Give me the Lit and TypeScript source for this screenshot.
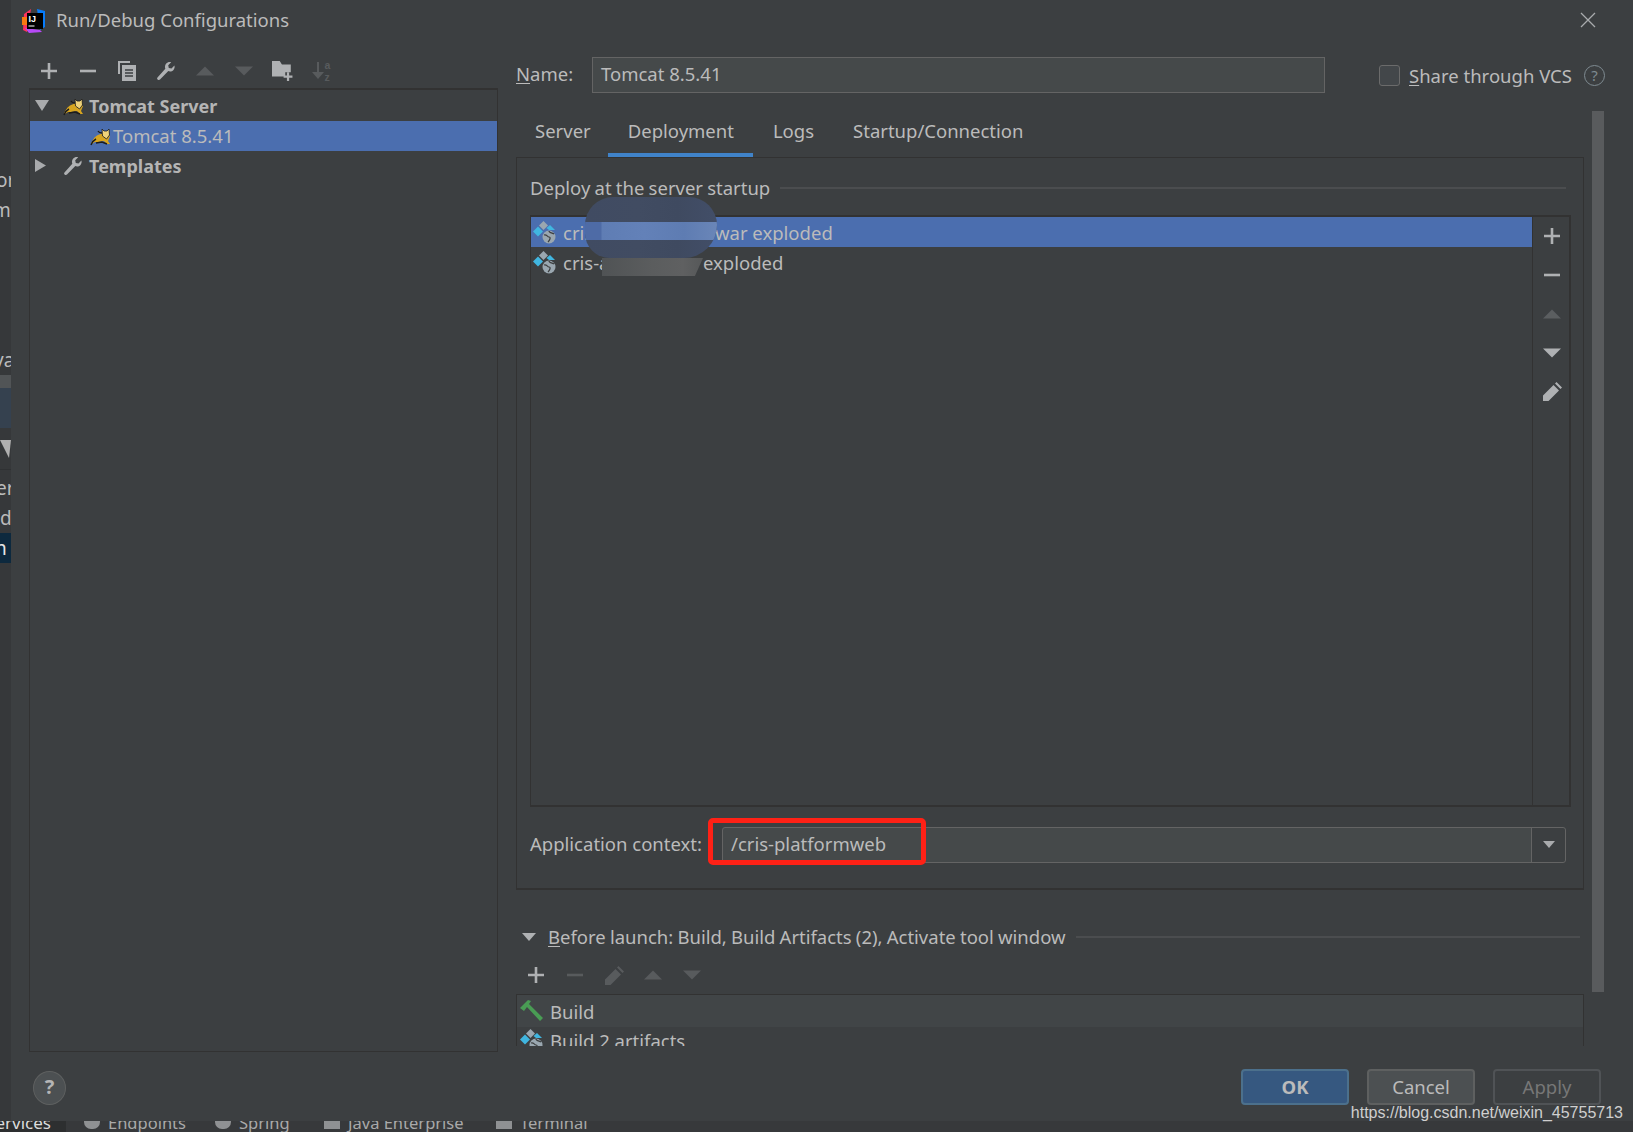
import { LitElement, html, svg, css } from "lit"
import { customElement } from "lit/decorators.js"

const plus = svg`<path d="M8 0v16M0 8h16" stroke="currentColor" stroke-width="2.6" fill="none"/>`
const minus = svg`<path d="M0 8h16" stroke="currentColor" stroke-width="2.6" fill="none"/>`
const up = svg`<path d="M9 4.500 18 13.500H0z" fill="currentColor"/>`
const down = svg`<path d="M0 4.500h18L9 13.500z" fill="currentColor"/>`
const pencil = svg`<path d="M0 19v-5.500L10.500 3l5.500 5.500L5.500 19zM12 1.500 13.500 0 19 5.500l-1.500 1.500z" fill="currentColor"/>`
const copy = svg`<path d="M0 0h12v2H2v11H0z" fill="currentColor"/><path d="M4 4h14v16H4z" fill="currentColor"/><path d="M7 9h8M7 12h8M7 15h8" stroke="#3c3f41" stroke-width="1.3"/>`
const wrench = svg`<path d="M1.500 16.500 9.300 7.800c-.9-2.700.1-5.300 2.400-6.400 1.200-.6 2.500-.6 3.500-.2l-3 3 .6 2.700 2.700.6 2.900-3c.5 1.500.2 3.100-.9 4.400-1.400 1.500-3.400 1.900-5.200 1.200L4 18.600c-.8.600-1.800.4-2.400-.2-.6-.6-.7-1.300-.1-1.900z" fill="currentColor"/>`

function icon(body: unknown, w = 16, h = 16, cls = "") {
  return html`<svg class="ico ${cls}" width=${w} height=${h} viewBox="0 0 ${w} ${h}">${body}</svg>`
}

const folderPlus = html`<svg class="ico" width="21" height="21" viewBox="0 0 19 19">
  <path d="M0 1h7l2 3h8v7h-5v4H0z" fill="currentColor"/>
  <path d="M14.500 11v8M10.500 15h8" stroke="currentColor" stroke-width="2" fill="none"/>
</svg>`

const tomcat = html`<svg class="ico" width="22" height="20" viewBox="0 0 22 20">
  <path d="M1 17c2-3 3-6 7-8l5-2 7 3-2 5 2 3h-3l-3-3-6 1-3 0-3 2z" fill="#d7a520"/>
  <path d="M12 3l2 2h3l2-2 .5 6-3 4-4-3z" fill="#efd37a" stroke="#1c1c1c" stroke-width=".8"/>
  <path d="M1 19c1-3 3-5 5-6M8 5c1 2 2 2 4 2M6 17l6-1 5 2" stroke="#1c1c1c" stroke-width="1.4" fill="none"/>
</svg>`

const artifact = html`<svg class="ico" width="24" height="24" viewBox="0 0 24 24">
  <path d="M10.500 1 15 5.500 10.500 10 6 5.500z" fill="#9aa7b0"/>
  <path d="M5 6.500 10 11.500 5 16.500 0 11.500z" fill="#40b6e0"/>
  <path d="M17 5l5 5h-6l-2.500-2z" fill="#40b6e0"/>
  <circle cx="16" cy="17" r="6.500" fill="#9aa7b0"/>
  <path d="M11 15c3-1 3 2 5 2s1 3-1 5M16 11c0 2 4 2 5 3" stroke="#3c3f41" stroke-width="1.2" fill="none"/>
</svg>`

const hammer = html`<svg class="ico" width="24" height="24" viewBox="0 0 24 24">
  <path d="M0 9 8 1l3 1-2 3 14 14-3 3L7 8l-3 4z" fill="#499c54"/>
</svg>`

const logo = html`<svg class="ico" width="24" height="25" viewBox="0 0 24 25">
  <path d="M2 6 9 1 5 24l-4-2z" fill="#fe315d"/>
  <path d="M0 9h5v8H0z" fill="#f97a12"/>
  <path d="M15 1l8 2v16l-5 3z" fill="#087cfa"/>
  <path d="M3 20l15 2 2 2-13 1z" fill="#b74af7"/>
  <path d="M5 5h16v16H5z" fill="#000"/>
  <text x="6.500" y="14" font-family="Liberation Sans, sans-serif" font-size="9" font-weight="700" fill="#fff">IJ</text>
  <path d="M6.500 18h6" stroke="#fff" stroke-width="1"/>
</svg>`

const sortAz = html`<svg class="ico" width="20" height="20" viewBox="0 0 20 20">
  <path d="M6 1v13" stroke="currentColor" stroke-width="2"/>
  <path d="M0 11h12l-6 7z" fill="currentColor"/>
  <text x="12.500" y="8" font-family="Liberation Sans, sans-serif" font-size="10.5" font-weight="700" fill="currentColor">a</text>
  <text x="12.500" y="19.500" font-family="Liberation Sans, sans-serif" font-size="10.5" font-weight="700" fill="currentColor">z</text>
</svg>`

@customElement("app-root")
export class AppRoot extends LitElement {
  static styles = css`
    :host {
      display: block;
      position: relative;
      width: 1633px;
      height: 1132px;
      overflow: hidden;
      background: #3c3f41;
      color: #bbbbbb;
      font-family: "Noto Sans", "Open Sans", sans-serif;
      font-size: 18.5px;
    }

    .ico {
      display: block;
      flex: none;
    }

    /* IDE behind the dialog, the dialog paints over whatever sticks out */
    .ide {
      display: grid;
      grid-template-columns: 11px 1fr 11px;
      grid-template-rows: 1121px 11px;
      height: 100%;
    }
    .strip {
      display: flex;
      flex-direction: column;
      white-space: nowrap;
    }
    .strip.left {
      background: #36383a;
      font-size: 19px;
    }
    .l-gap-1 { height: 165px; flex: none; }
    .l-row,
    .l-sel {
      height: 30px;
      line-height: 30px;
      flex: none;
    }
    .l-row span,
    .l-sel span {
      display: block;
      width: 11px;
    }
    .l-shift-or { margin-left: -4px; }
    .l-shift-m { margin-left: -7px; }
    .l-shift-va { margin-left: -6px; }
    .l-shift-er { margin-left: -4px; }
    .l-shift-d { margin-left: 0; }
    .l-shift-n { margin-left: -5px; }
    .l-gap-2 { height: 120px; flex: none; }
    .l-head { height: 13px; flex: none; background: #515456; }
    .l-blue { height: 40px; flex: none; background: #35414f; }
    .l-filter {
      height: 42px;
      flex: none;
      padding-top: 12px;
      box-sizing: border-box;
      color: #b0b0b0;
      border-bottom: 1px solid #2f3133;
    }
    .l-filter i {
      display: block;
      width: 0;
      border-top: 18px solid currentColor;
      border-left: 9px solid transparent;
      border-right: 2px solid transparent;
    }
    .l-gap-3 { height: 3px; flex: none; }
    .l-sel {
      background: #0d293e;
      color: #e6e6e6;
    }

    .strip.right {
      position: relative;
      z-index: 1;
      background: #2b2b2b;
      font-family: "Liberation Mono", monospace;
      font-size: 21px;
    }
    .r-head { height: 28px; flex: none; background: #37393b; }
    .r-navy { height: 30px; flex: none; background: #0d293e; }
    .r-plain { height: 332px; flex: none; background: #37393b; }
    .r-blue { height: 48px; flex: none; background: #2f3f4f; }
    .r-tail { height: 77px; flex: none; background: #37393b; }
    .r-lines {
      margin-top: -4px;
      line-height: 29.5px;
    }
    .r-lines .red { color: #e0504d; }
    .r-lines .blue { color: #a9b7c6; }

    .bottom {
      grid-column: 1 / 4;
      display: flex;
      align-items: center;
      background: #37393b;
      overflow: hidden;
      font-size: 16.5px;
      color: #a9a9a9;
      white-space: nowrap;
    }
    .bottom span {
      display: flex;
      align-items: center;
      gap: 8px;
      margin-top: -9px;
    }
    .bottom .services {
      align-self: stretch;
      width: 66px;
      justify-content: flex-end;
      margin: 0 18px 0 0;
      padding: 0 15px 8px 0;
      box-sizing: border-box;
      background: #2d2f30;
      color: #dcdcdc;
      font-size: 17px;
      line-height: 0;
    }
    .bottom .tool-1 { width: 131px; }
    .bottom .tool-2 { width: 109px; }
    .bottom .tool-3 { width: 172px; }
    .bottom b {
      display: block;
      width: 16px;
      height: 14px;
      background: #8f9193;
    }
    .bottom .round b {
      border-radius: 8px;
    }

    /* dialog */
    .dialog {
      position: absolute;
      left: 11px;
      top: 0;
      width: 1611px;
      height: 1121px;
      display: flex;
      flex-direction: column;
      background: #3c3f41;
    }

    .titlebar {
      height: 40px;
      flex: none;
      display: flex;
      align-items: center;
      padding: 0 26px 0 11px;
      box-sizing: border-box;
    }
    .title {
      margin: -2px 0 0 10px;
      flex: 1;
    }
    .close {
      color: #a9abad;
    }

    .body {
      height: 1012px;
      flex: none;
      display: flex;
      padding-left: 18px;
    }

    .left {
      width: 469px;
      flex: none;
      display: flex;
      flex-direction: column;
    }
    .toolbar {
      display: grid;
      grid-auto-flow: column;
      grid-auto-columns: 39px;
      justify-items: center;
      align-items: center;
      justify-content: start;
      color: #afb1b3;
    }
    .toolbar .off {
      color: #585b5d;
    }
    .toolbar.main {
      height: 48px;
      flex: none;
      padding-top: 13px;
      box-sizing: border-box;
    }

    .tree {
      flex: 1;
      border: solid #323232;
      border-width: 2px 1px 1px 1px;
    }
    .tree-row {
      height: 30px;
      display: flex;
      align-items: center;
      box-sizing: border-box;
    }
    .tree-row:first-child {
      height: 31px;
    }
    .tree-row.sel {
      background: #4b6eaf;
      padding-left: 60px;
    }
    .tree-row.head {
      font-weight: 700;
      font-size: 18px;
      padding-left: 5px;
      color: #b5b5b5;
    }
    .arrow {
      width: 28px;
      flex: none;
      color: #a9abad;
    }
    .tree-row .lbl {
      margin: -1px 0 0 4px;
    }
    .tree-row:first-child .lbl {
      margin-top: 0;
    }
    .tree-row.sel .lbl {
      margin: -2px 0 0 1px;
    }
    .tree-wrench {
      margin-right: 2px;
      color: #afb1b3;
    }

    .right {
      flex: 1;
      min-width: 0;
      margin-left: 18px;
      position: relative;
      display: flex;
      flex-direction: column;
    }

    .name-row {
      display: flex;
      align-items: center;
      height: 36px;
      margin-top: 17px;
      flex: none;
    }
    .name-label {
      width: 76px;
      flex: none;
      margin-top: -4px;
    }
    u {
      text-underline-offset: 2px;
    }
    .field {
      background: #45494a;
      border: 1px solid #646464;
      box-sizing: border-box;
      height: 36px;
      display: flex;
      align-items: center;
      padding-left: 8px;
    }
    .field span {
      margin-bottom: 4px;
    }
    .name-field {
      width: 733px;
      flex: none;
    }
    .share {
      display: flex;
      align-items: center;
      margin-left: 54px;
    }
    .check {
      width: 21px;
      height: 21px;
      box-sizing: border-box;
      border: 1px solid #6b6b6b;
      border-radius: 3px;
      background: #43474a;
      margin-right: 9px;
    }
    .hint {
      width: 21px;
      height: 21px;
      box-sizing: border-box;
      margin-left: 12px;
      border: 1.5px solid #7f8b91;
      border-radius: 50%;
      color: #7f8b91;
      font-size: 15px;
      line-height: 18px;
      text-align: center;
    }

    .tabs {
      display: flex;
      height: 46px;
      margin-top: 18px;
      width: 1068px;
      flex: none;
    }
    .tab {
      padding: 0 19px;
      height: 46px;
      line-height: 40px;
      box-sizing: border-box;
    }
    .tab:first-child {
      padding-right: 17px;
    }
    .tab.active {
      padding-left: 20px;
      border-bottom: 4px solid #4083c9;
    }
    .tab.logs {
      padding-left: 20px;
    }
    .tab:last-child {
      margin-left: 1px;
    }

    .panel {
      width: 1068px;
      height: 733px;
      flex: none;
      box-sizing: border-box;
      border: 1px solid #323232;
      border-bottom-width: 2px;
      padding: 0 17px 0 13px;
      display: flex;
      flex-direction: column;
    }
    .sep {
      display: flex;
      align-items: center;
      gap: 10px;
      word-spacing: -0.6px;
    }
    .sep > span:not(.before-arrow) {
      margin-top: -2px;
    }
    .sep::after {
      content: "";
      flex: 1;
      height: 2px;
      background: #4b4d4f;
    }
    .panel .sep {
      height: 30px;
      margin-top: 15px;
      margin-bottom: 12px;
      flex: none;
    }

    .deploy {
      height: 592px;
      flex: none;
      width: 1041px;
      box-sizing: border-box;
      border: solid #323232;
      border-width: 2px 2px 2px 1px;
      display: flex;
    }
    .items {
      flex: 1;
      border-right: 1px solid #323232;
    }
    .item {
      height: 30px;
      display: flex;
      align-items: center;
      gap: 6px;
    }
    .item.sel {
      background: #4b6eaf;
    }
    .item .ico {
      margin-left: 2px;
    }
    .cut-a { width: 146px; flex: none; }
    .cut-b { width: 134px; flex: none; }
    .side {
      width: 34px;
      padding-left: 2px;
      margin-top: -1px;
      flex: none;
      display: grid;
      grid-auto-rows: 39px;
      justify-items: center;
      align-items: center;
      align-content: start;
      color: #afb1b3;
    }
    .side .off {
      color: #5b5e60;
    }

    .context {
      display: flex;
      align-items: center;
      margin-top: 20px;
      height: 36px;
    }
    .context-label {
      width: 192px;
      flex: none;
      margin-top: -4px;
    }
    .context-field {
      flex: 1;
      border-radius: 3px;
      padding-right: 0;
      justify-content: space-between;
    }
    .drop {
      width: 33px;
      align-self: stretch;
      display: flex;
      align-items: center;
      justify-content: center;
      background: #3c3f41;
      border-left: 1px solid #646464;
      border-radius: 0 3px 3px 0;
      color: #a9abad;
    }

    .before {
      height: 30px;
      margin-top: 32px;
      flex: none;
      width: 1058px;
      padding-left: 6px;
    }
    .before-arrow {
      margin-right: 2px;
      color: #afb1b3;
    }
    .before .sep {
      height: 30px;
    }
    .toolbar.steps {
      height: 38px;
      padding-left: 0.5px;
      margin-top: 4px;
      flex: none;
    }
    .steps-list {
      height: 52px;
      width: 1068px;
      flex: none;
      overflow: hidden;
      box-sizing: border-box;
      border: solid #323232;
      border-width: 1px 1px 0 1px;
    }
    .step {
      height: 32px;
      display: flex;
      align-items: center;
      gap: 6px;
      padding-left: 3px;
    }
    .step.sel {
      background: #414547;
    }
    .step:last-child {
      margin-top: -3px;
    }

    .scroll {
      position: absolute;
      left: 1076px;
      top: 71px;
      width: 12px;
      height: 881px;
      background: #595b5d;
    }

    .footer {
      flex: 1;
      display: flex;
      align-items: center;
      padding: 17px 21px 16px 22px;
      box-sizing: border-box;
    }
    .help {
      width: 33px;
      height: 34px;
      box-sizing: border-box;
      margin-top: 2px;
      border: 1px solid #5e6060;
      border-radius: 50%;
      background: #4c5052;
      color: #b5b5b5;
      font-weight: 700;
      font-size: 20px;
      line-height: 30px;
      text-align: center;
      margin-right: auto;
    }
    .btn {
      width: 108px;
      height: 36px;
      box-sizing: border-box;
      margin-left: 18px;
      border: 2px solid #5e6060;
      border-radius: 4px;
      background: #4c5052;
      line-height: 32px;
      text-align: center;
    }
    .btn.ok {
      background: #365880;
      border-color: #4c708c;
      font-weight: 700;
    }
    .btn.apply {
      background: #3c3f41;
      border-color: #505356;
      color: #777777;
    }

    /* overlays baked into the screenshot */
    .blob {
      position: absolute;
      left: 585px;
      top: 197px;
      width: 132px;
      height: 61px;
      border-radius: 34px 34px 40px 30px;
      background: linear-gradient(90deg, #404b62, #414c62 40%, #3f4a60 70%, #424e68);
      overflow: hidden;
    }
    .blob i {
      display: block;
      margin-top: 25px;
      height: 18px;
      background: linear-gradient(
        90deg,
        #4e6ba6 12%,
        #5f7db4 13%,
        #6381b8 45%,
        #5e7cb2 75%,
        #6a86b8
      );
    }
    .smudge {
      position: absolute;
      left: 602px;
      top: 258px;
      width: 101px;
      height: 18px;
      background: linear-gradient(90deg, #505355, #5b5d5e 50%, #5f6061 80%, #565859);
      clip-path: polygon(0 0, 100% 0, 92% 100%, 0 100%);
    }
    .mark {
      position: absolute;
      left: 708px;
      top: 818px;
      width: 218px;
      height: 47px;
      box-sizing: border-box;
      border: 5px solid #ff2116;
      border-radius: 5px;
    }
    .watermark {
      position: absolute;
      right: 10px;
      top: 1103px;
      font-family: "Liberation Sans", sans-serif;
      font-size: 16px;
      line-height: 20px;
      color: #cfcfcf;
      white-space: nowrap;
    }
  `

  render() {
    return html`
      <div class="ide">
        <div class="strip left">
          <div class="l-gap-1"></div>
          <div class="l-row"><span class="l-shift-or">or</span></div>
          <div class="l-row"><span class="l-shift-m">m</span></div>
          <div class="l-gap-2"></div>
          <div class="l-row"><span class="l-shift-va">va</span></div>
          <div class="l-head"></div>
          <div class="l-blue"></div>
          <div class="l-filter"><i></i></div>
          <div class="l-gap-3"></div>
          <div class="l-row"><span class="l-shift-er">er</span></div>
          <div class="l-row"><span class="l-shift-d">d</span></div>
          <div class="l-sel"><span class="l-shift-n">n</span></div>
        </div>
        <div></div>
        <div class="strip right">
          <div class="r-head"></div>
          <div class="r-navy"></div>
          <div class="r-plain"></div>
          <div class="r-blue"></div>
          <div class="r-tail"></div>
          <div class="r-lines">
            <div class="blue">ch</div>
            <div class="red">f</div>
            <div class="red">f</div>
            ${[...Array(7)].map(() => html`<div class="red">r</div>`)}
            <div class="red">i</div>
            <div class="red">o</div>
            <div class="red">t</div>
            <div class="red">j</div>
            <div class="blue">V</div>
            <div class="blue">V</div>
            <div class="blue">sh</div>
          </div>
        </div>
        <div class="bottom">
          <span class="services">ervices</span>
          <span class="tool-1 round"><b></b>Endpoints</span>
          <span class="tool-2 round"><b></b>Spring</span>
          <span class="tool-3"><b></b>Java Enterprise</span>
          <span><b></b>Terminal</span>
        </div>
      </div>

      <div class="dialog">
        <div class="titlebar">
          ${logo}
          <div class="title">Run/Debug Configurations</div>
          <svg class="ico close" width="16" height="16" viewBox="0 0 16 16">
            <path d="M1 1l14 14M15 1 1 15" stroke="currentColor" stroke-width="1.3" />
          </svg>
        </div>

        <div class="body">
          <div class="left">
            <div class="toolbar main">
              ${icon(plus)} ${icon(minus)} ${icon(copy, 18, 20)} ${icon(wrench, 20, 20)}
              ${icon(up, 18, 18, "off")} ${icon(down, 18, 18, "off")}
              ${folderPlus}
              <span class="off">${sortAz}</span>
            </div>
            <div class="tree">
              <div class="tree-row head">
                <span class="arrow">${icon(svg`<path d="M0 2h14L7 13z" fill="currentColor"/>`)}</span>
                ${tomcat}<span class="lbl">Tomcat Server</span>
              </div>
              <div class="tree-row sel">${tomcat}<span class="lbl">Tomcat 8.5.41</span></div>
              <div class="tree-row head">
                <span class="arrow">${icon(svg`<path d="M0 1l11 6.500L0 14z" fill="currentColor"/>`)}</span>
                <span class="tree-wrench">${icon(wrench, 20, 20)}</span>
                <span class="lbl">Templates</span>
              </div>
            </div>
          </div>

          <div class="right">
            <div class="name-row">
              <div class="name-label"><u>N</u>ame:</div>
              <div class="field name-field"><span>Tomcat 8.5.41</span></div>
              <div class="share">
                <div class="check"></div>
                <div><u>S</u>hare through VCS</div>
                <div class="hint">?</div>
              </div>
            </div>

            <div class="tabs">
              <div class="tab">Server</div>
              <div class="tab active">Deployment</div>
              <div class="tab logs">Logs</div>
              <div class="tab">Startup/Connection</div>
            </div>

            <div class="panel">
              <div class="sep"><span>Deploy at the server startup</span></div>
              <div class="deploy">
                <div class="items">
                  <div class="item sel">
                    ${artifact}<span class="cut-a">cris</span><span>war exploded</span>
                  </div>
                  <div class="item">
                    ${artifact}<span class="cut-b">cris-a</span><span>exploded</span>
                  </div>
                </div>
                <div class="side">
                  ${icon(plus)} ${icon(minus)} ${icon(up, 18, 18, "off")} ${icon(down, 18, 18)}
                  ${icon(pencil, 19, 19)}
                </div>
              </div>
              <div class="context">
                <div class="context-label">Application context:</div>
                <div class="field context-field">
                  <span>/cris-platformweb</span>
                  <div class="drop">${icon(svg`<path d="M2 4h12L8 11z" fill="currentColor"/>`)}</div>
                </div>
              </div>
            </div>

            <div class="before">
              <div class="sep">
                <span class="before-arrow"
                  >${icon(svg`<path d="M0 4h14L7 12z" fill="currentColor"/>`, 14, 16)}</span
                >
                <span><u>B</u>efore launch: Build, Build Artifacts (2), Activate tool window</span>
              </div>
            </div>
            <div class="toolbar steps">
              ${icon(plus)} ${icon(minus, 16, 16, "off")} ${icon(pencil, 19, 19, "off")}
              ${icon(up, 18, 18, "off")} ${icon(down, 18, 18, "off")}
            </div>
            <div class="steps-list">
              <div class="step sel">${hammer}<span>Build</span></div>
              <div class="step">${artifact}<span>Build 2 artifacts</span></div>
            </div>

            <div class="scroll"></div>
          </div>
        </div>

        <div class="footer">
          <div class="help">?</div>
          <div class="btn ok">OK</div>
          <div class="btn">Cancel</div>
          <div class="btn apply">Apply</div>
        </div>
      </div>

      <div class="blob"><i></i></div>
      <div class="smudge"></div>
      <div class="mark"></div>
      <div class="watermark">https://blog.csdn.net/weixin_45755713</div>
    `
  }
}
